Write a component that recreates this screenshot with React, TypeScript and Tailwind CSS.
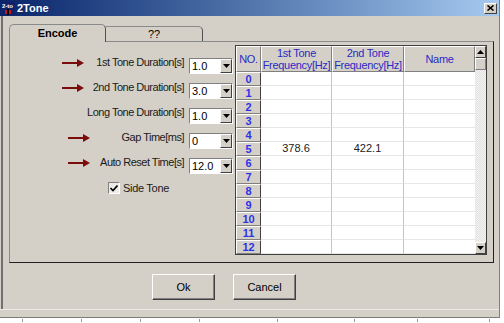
import React from "react";

const font = "font-['Liberation_Sans',Arial,sans-serif]";

const settings = [
  { label: "1st Tone Duration[s]", value: "1.0", arrow: "ml-[52px]" },
  { label: "2nd Tone Duration[s]", value: "3.0", arrow: "ml-[52px]" },
  { label: "Long Tone Duration[s]", value: "1.0", arrow: "" },
  { label: "Gap Time[ms]", value: "0", arrow: "ml-[58px]" },
  { label: "Auto Reset Time[s]", value: "12.0", arrow: "ml-[58px]" },
];

const tones: Record<number, [string, string]> = { 5: ["378.6", "422.1"] };

function Arrow() {
  return (
    <svg width="22" height="8" viewBox="0 0 22 8" className="shrink-0">
      <rect x="0" y="3" width="16" height="2" fill="#7a0c0c" />
      <polygon points="15,0 22,4 15,8" fill="#7a0c0c" />
    </svg>
  );
}

function DownTri() {
  return (
    <svg width="7" height="4" viewBox="0 0 7 4">
      <polygon points="0,0 7,0 3.5,4" fill="#000" />
    </svg>
  );
}

function Combo({ value }: { value: string }) {
  return (
    <div className="w-[44px] h-[16px] flex border border-t-[#808080] border-l-[#808080] border-b-white border-r-white bg-white shrink-0">
      <div className="flex-1 flex items-center pl-[2px] text-[11px] text-black leading-none">
        {value}
      </div>
      <div className="w-[12px] flex items-center justify-center bg-[#d4d0c8] border border-t-white border-l-white border-b-[#404040] border-r-[#404040]">
        <DownTri />
      </div>
    </div>
  );
}

function ScrollBtn({ up }: { up?: boolean }) {
  return (
    <div className="h-[12px] flex items-center justify-center bg-[#d4d0c8] border border-t-white border-l-white border-b-[#404040] border-r-[#404040]">
      <svg width="7" height="4" viewBox="0 0 7 4" className={up ? "rotate-180" : ""}>
        <polygon points="0,0 7,0 3.5,4" fill="#000" />
      </svg>
    </div>
  );
}

function Grid() {
  const rows = Array.from({ length: 13 }, (_, i) => i);
  const head =
    "h-[26px] flex items-center justify-center text-center bg-[#d4d0c8] border border-t-white border-l-white border-b-[#808080] border-r-[#808080] text-[11px] leading-[12px] text-[#2a2ac4] tracking-[-0.3px]";
  return (
    <div className="w-[252px] h-[210px] border border-[#404040] flex bg-white">
      <div className="w-[239px] grid grid-cols-[25px_71px_72px_71px] content-start">
        <div className={head}>NO.</div>
        <div className={head}>
          1st Tone
          <br />
          Frequency[Hz]
        </div>
        <div className={head}>
          2nd Tone
          <br />
          Frequency[Hz]
        </div>
        <div className={head}>Name</div>
        {rows.map((r) => (
          <React.Fragment key={r}>
            <div className="h-[14px] flex items-center justify-center bg-[#d4d0c8] border border-t-white border-l-white border-b-[#808080] border-r-[#404040] text-[11px] font-bold text-[#3030e8] leading-none">
              {r}
            </div>
            <div className="h-[14px] flex items-center justify-center border-r border-b border-r-[#c4c4c4] border-b-[#e6e6e6] text-[11px] text-[#202020] leading-none">
              {tones[r]?.[0] ?? ""}
            </div>
            <div className="h-[14px] flex items-center justify-center border-r border-b border-r-[#c4c4c4] border-b-[#e6e6e6] text-[11px] text-[#202020] leading-none">
              {tones[r]?.[1] ?? ""}
            </div>
            <div className="h-[14px] border-b border-b-[#e6e6e6]" />
          </React.Fragment>
        ))}
      </div>
      <div className="w-[11px] flex flex-col">
        <ScrollBtn up />
        <div className="h-[12px] bg-[#d4d0c8] border border-t-white border-l-white border-b-[#808080] border-r-[#808080]" />
        <div className="flex-1 bg-[repeating-conic-gradient(#e4e2de_0_25%,#f4f3f1_0_50%)] bg-[length:2px_2px]" />
        <ScrollBtn />
      </div>
    </div>
  );
}

function WinButton({ label }: { label: string }) {
  return (
    <div className="w-[63px] h-[26px] flex items-center justify-center bg-[#d4d0c8] border border-t-white border-l-white border-b-[#404040] border-r-[#404040] shadow-[inset_-1px_-1px_0_#808080] text-[11px] text-black">
      {label}
    </div>
  );
}

export default function App() {
  const ticks = [22, 81, 140, 199, 277, 354, 417, 489];
  return (
    <div className={`w-[504px] h-[323px] bg-white overflow-hidden relative ${font} select-none`}>
      <div className="w-[500px] h-[318px] bg-[#d4d0c8] border-r border-[#808080] flex flex-col">
        {/* title bar */}
        <div className="h-[16px] flex items-center bg-gradient-to-r from-[#0a246a] to-[#a6caf0] pl-[2px] pr-[2px]">
          <svg width="13" height="13" viewBox="0 0 13 13" className="shrink-0">
            <rect x="0" y="0" width="13" height="13" fill="#10206a" />
            <text x="0" y="6" fontSize="6" fill="#fff" fontWeight="bold" fontFamily="Liberation Sans">2-to</text>
            <rect x="3" y="8" width="6" height="4" fill="#c01818" />
            <rect x="5" y="7" width="2" height="6" fill="#000" />
          </svg>
          <span className="ml-[2px] text-[11px] font-bold text-white leading-none">2Tone</span>
          <div className="ml-auto w-[13px] h-[11px] flex items-center justify-center bg-[#d4d0c8] border border-t-white border-l-white border-b-[#404040] border-r-[#404040]">
            <svg width="7" height="6" viewBox="0 0 7 6">
              <path d="M0.5 0.5 L6.5 5.5 M6.5 0.5 L0.5 5.5" stroke="#000" strokeWidth="1.6" />
            </svg>
          </div>
        </div>

        {/* client */}
        <div className="flex-1 flex flex-col border-l-2 border-[#6f6f6f] ml-px">
          {/* tabs */}
          <div className="flex items-end ml-[6px] mt-[7px] h-[18px]">
            <div className="relative z-10 -mb-px w-[97px] h-[18px] flex items-center justify-center bg-[#d4d0c8] border border-b-0 border-t-[#8a8a8a] border-l-[#8a8a8a] border-r-[#505050] rounded-t-[5px] text-[11px] font-bold text-black">
              Encode
            </div>
            <div className="w-[97px] h-[15px] flex items-center justify-center bg-[#d4d0c8] border border-b-0 border-t-[#8a8a8a] border-l-0 border-r-[#505050] rounded-tr-[5px] text-[11px] text-black">
              ??
            </div>
          </div>

          {/* panel */}
          <div className="ml-[6px] w-[485px] h-[222px] flex border border-t-[#8a8a8a] border-l-[#8a8a8a] border-b-[#202020] border-r-[#202020]">
            <div className="w-[225px] pt-[16px] flex flex-col gap-[9px]">
              {settings.map((s) => (
                <div key={s.label} className="h-[16px] flex items-center">
                  {s.arrow ? (
                    <div className={`${s.arrow} -mt-[6px]`}>
                      <Arrow />
                    </div>
                  ) : null}
                  <div className="flex-1 text-right text-[11px] text-[#1a1a1a] tracking-[-0.5px] -mt-[7px] pr-[5px] whitespace-nowrap">
                    {s.label}
                  </div>
                  <div className="mr-[2px]">
                    <Combo value={s.value} />
                  </div>
                </div>
              ))}
              <div className="flex items-center ml-[98px] -mt-[3px] gap-[3px]">
                <div className="w-[12px] h-[12px] flex items-center justify-center bg-[#ecebe8] border border-t-[#808080] border-l-[#808080] border-b-white border-r-white">
                  <svg width="8" height="7" viewBox="0 0 8 7">
                    <path d="M0.5 3 L3 5.5 L7.5 0.5" stroke="#000" strokeWidth="1.6" fill="none" />
                  </svg>
                </div>
                <span className="text-[11px] text-[#1a1a1a] tracking-[-0.3px]">Side Tone</span>
              </div>
            </div>
            <div className="mt-[3px]">
              <Grid />
            </div>
          </div>

          {/* buttons */}
          <div className="flex gap-[18px] ml-[149px] mt-[11px]">
            <WinButton label="Ok" />
            <WinButton label="Cancel" />
          </div>
          <div className="flex-1" />
        </div>
        <div className="h-[9px] border-t border-[#ecebe8] border-b border-b-[#7a7a7a]" />
      </div>
      <div className="relative h-[5px]">
        {ticks.map((x) => (
          <div key={x} className="absolute top-[1px] w-px h-[3px] bg-[#9a9a9a]" style={{ left: x }} />
        ))}
      </div>
    </div>
  );
}
